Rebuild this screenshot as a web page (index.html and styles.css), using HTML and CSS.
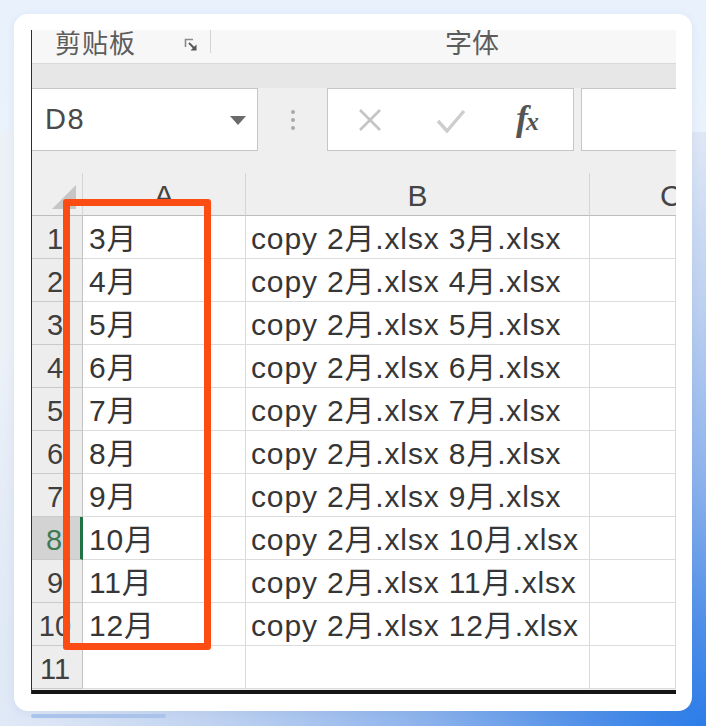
FILE: index.html
```html
<!DOCTYPE html>
<html lang="zh">
<head>
<meta charset="utf-8">
<title>Excel 截图</title>
<link rel="stylesheet" href="styles.css">
</head>
<body>
<div class="card">
  <div class="shot">
    <div class="ribbon">
      <div class="grp grp-clip">
        <span class="grp-label">剪贴板</span>
        <svg class="launcher" width="14" height="14" viewBox="0 0 14 14"><path d="M1.5 9V1.5H9" fill="none" stroke="#8a8a8a" stroke-width="1.6"/><path d="M5 5l5 5" stroke="#555" stroke-width="1.8"/><polygon points="12.5,6.5 12.5,12.5 6.5,12.5" fill="#555"/></svg>
      </div>
      <div class="rsep"></div>
      <div class="grp grp-font"><span class="grp-label">字体</span></div>
    </div>
    <div class="fzone">
      <div class="fbar">
        <div class="namebox">
          <span class="nb-text">D8</span>
          <svg class="caret" width="16" height="9" viewBox="0 0 16 9"><polygon points="0,0 16,0 8,9" fill="#6a6a6a"/></svg>
        </div>
        <div class="dots"><i></i><i></i><i></i></div>
        <div class="fbtns">
          <svg class="ico-x" width="24" height="24" viewBox="0 0 24 24"><path d="M2 2L22 22M22 2L2 22" stroke="#c4c4c4" stroke-width="2.6"/></svg>
          <svg class="ico-ok" width="30" height="26" viewBox="0 0 30 26"><path d="M2 13L11 23L28 3" fill="none" stroke="#cdcdcd" stroke-width="3.4"/></svg>
          <span class="fx">f<span class="fx-x">x</span></span>
        </div>
        <div class="finput"></div>
      </div>
    </div>
    <div class="grid">
      <div class="ch corner"><svg width="24" height="24" viewBox="0 0 24 24"><polygon points="24,0 24,24 0,24" fill="#c6c6c6"/></svg></div>
      <div class="ch">A</div>
      <div class="ch">B</div>
      <div class="ch ch-c">C</div>

      <div class="rh">1</div><div class="c ca">3月</div><div class="c cb">copy 2月.xlsx 3月.xlsx</div><div class="c"></div>
      <div class="rh">2</div><div class="c ca">4月</div><div class="c cb">copy 2月.xlsx 4月.xlsx</div><div class="c"></div>
      <div class="rh">3</div><div class="c ca">5月</div><div class="c cb">copy 2月.xlsx 5月.xlsx</div><div class="c"></div>
      <div class="rh">4</div><div class="c ca">6月</div><div class="c cb">copy 2月.xlsx 6月.xlsx</div><div class="c"></div>
      <div class="rh">5</div><div class="c ca">7月</div><div class="c cb">copy 2月.xlsx 7月.xlsx</div><div class="c"></div>
      <div class="rh">6</div><div class="c ca">8月</div><div class="c cb">copy 2月.xlsx 8月.xlsx</div><div class="c"></div>
      <div class="rh">7</div><div class="c ca">9月</div><div class="c cb">copy 2月.xlsx 9月.xlsx</div><div class="c"></div>
      <div class="rh rh-sel">8</div><div class="c ca">10月</div><div class="c cb">copy 2月.xlsx 10月.xlsx</div><div class="c"></div>
      <div class="rh">9</div><div class="c ca">11月</div><div class="c cb">copy 2月.xlsx 11月.xlsx</div><div class="c"></div>
      <div class="rh">10</div><div class="c ca">12月</div><div class="c cb">copy 2月.xlsx 12月.xlsx</div><div class="c"></div>
      <div class="rh">11</div><div class="c ca"></div><div class="c cb"></div><div class="c"></div>
    </div>
    <div class="blackbar"></div>
    <div class="highlight"></div>
  </div>
</div>
<div class="hbar"></div>
</body>
</html>
```
FILE: styles.css
```css
html {
  background:
    radial-gradient(ellipse 820px 720px at 100% 100%, #2b7de9 0%, #4f8fe8 14%, #8cb2ec 34%, #bcd0f0 58%, #dbe5f5 80%, #ecf1f8 100%) 0 132px / 100% 594px no-repeat,
    linear-gradient(180deg, #e8f1fc 0%, #f1f5fb 100%);
  min-height: 100%;
}
body {
  margin: 0;
  padding: 14px 0 0 14px;
  width: 706px;
  height: 726px;
  box-sizing: border-box;
  overflow: hidden;
  font-family: "Liberation Sans", "Noto Sans CJK SC", sans-serif;
}
.card {
  width: 678px;
  height: 697px;
  box-sizing: border-box;
  padding: 16px 16px 17px 17px;
  background: #ffffff;
  border-radius: 14px;
  box-shadow: 0 2px 10px rgba(60, 100, 170, 0.08);
}
.hbar {
  width: 135px;
  height: 4px;
  margin: 3px 0 0 17px;
  border-radius: 2px;
  background: #a9c3ea;
}
.shot {
  position: relative;
  width: 645px;
  height: 664px;
  box-sizing: border-box;
  border-left: 1px solid #2e2e2e;
  overflow: hidden;
  background: #efefef;
  display: flex;
  flex-direction: column;
}
/* ribbon */
.ribbon {
  height: 34px;
  flex: none;
  box-sizing: border-box;
  background: #f7f7f7;
  border-bottom: 1px solid #d9d9d9;
  display: flex;
  align-items: flex-end;
  overflow: hidden;
}
.grp {
  display: flex;
  align-items: flex-end;
  height: 100%;
}
.grp-label {
  font-family: "Noto Sans CJK SC", sans-serif;
  font-size: 26px;
  line-height: 26px;
  color: #5c5c5c;
  padding-bottom: 8px;
}
.grp-clip {
  width: 178px;
  padding-left: 23px;
  box-sizing: border-box;
}
.grp-clip .grp-label { letter-spacing: 1px; }
.launcher {
  margin-left: 48px;
  margin-bottom: 11px;
}
.rsep {
  width: 1px;
  height: 23px;
  align-self: flex-start;
  background: #d3d3d3;
}
.grp-font {
  padding-left: 234px;
}
.grp-font .grp-label { font-size: 27px; }
/* formula zone */
.fzone {
  height: 109px;
  flex: none;
  box-sizing: border-box;
  background: linear-gradient(180deg, #e7e7e7 0, #e7e7e7 24px, #efefef 24px);
  padding-top: 24px;
}
.fbar {
  display: flex;
  height: 63px;
}
.namebox {
  width: 226px;
  box-sizing: border-box;
  background: #fff;
  border: 1px solid #c6c6c6;
  border-left: none;
  display: flex;
  align-items: center;
  padding-left: 13px;
  padding-right: 11px;
}
.nb-text {
  font-size: 29px;
  color: #4a4a4a;
  letter-spacing: 1.5px;
  flex: 1;
}
.caret { margin-top: 1px; }
.dots {
  width: 69px;
  display: flex;
  flex-direction: column;
  align-items: center;
  justify-content: center;
  gap: 4px;
}
.dots i {
  width: 4px;
  height: 4px;
  border-radius: 50%;
  background: #a9a9a9;
}
.fbtns {
  width: 247px;
  box-sizing: border-box;
  background: #fff;
  border: 1px solid #c6c6c6;
  display: flex;
  align-items: center;
  padding-left: 30px;
}
.ico-x { margin-right: 54px; }
.ico-ok { margin-right: 50px; margin-top: 2px; }
.fx {
  font-family: "Liberation Serif", serif;
  font-style: italic;
  font-weight: bold;
  font-size: 36px;
  line-height: 36px;
  color: #555;
  letter-spacing: -2px;
}
.fx-x {
  font-size: 26px;
}
.finput {
  margin-left: 7px;
  flex: 1;
  background: #fff;
  border: 1px solid #c6c6c6;
  border-right: none;
}
/* grid */
.grid {
  display: grid;
  grid-template-columns: 51px 163px 344px 86px;
  grid-template-rows: 43px repeat(11, 43px);
  background: #fff;
  flex: none;
}
.ch {
  background: #efefef;
  border-bottom: 1px solid #bdbdbd;
  border-right: 1px solid #d4d4d4;
  box-sizing: border-box;
  font-size: 30px;
  color: #444;
  display: flex;
  justify-content: center;
  align-items: flex-end;
  line-height: 30px;
  padding-bottom: 4px;
  overflow: hidden;
}
.ch-c { justify-content: flex-start; padding-left: 70px; border-right: none; }
.corner {
  align-items: flex-end;
  justify-content: flex-end;
  padding: 0 6px 6px 0;
}
.rh {
  background: #ededed;
  border-right: 1px solid #c3c3c3;
  border-bottom: 1px solid #cacaca;
  box-sizing: border-box;
  font-size: 29px;
  line-height: 29px;
  color: #3f3f3f;
  display: flex;
  justify-content: center;
  align-items: flex-end;
  padding: 0 4px 4px 0;
  white-space: nowrap;
  overflow: hidden;
}
.rh-sel {
  background: #d3d3d3;
  color: #3f7a55;
  border-right: 3px solid #217346;
}
.c {
  border-right: 1px solid #dadada;
  border-bottom: 1px solid #dcdcdc;
  box-sizing: border-box;
  font-size: 30px;
  line-height: 30px;
  color: #363636;
  display: flex;
  align-items: flex-end;
  padding-bottom: 4px;
  white-space: nowrap;
  overflow: hidden;
  letter-spacing: 0.85px;
}
.ca { padding-left: 6px; }
.cb { padding-left: 5px; }
.blackbar {
  margin-top: 1px;
  height: 4px;
  background: #151515;
  flex: none;
}
.highlight {
  position: absolute;
  left: 31px;
  top: 169px;
  width: 148px;
  height: 451px;
  box-sizing: border-box;
  border: 7px solid #fb4c14;
  border-radius: 3px;
}
```
